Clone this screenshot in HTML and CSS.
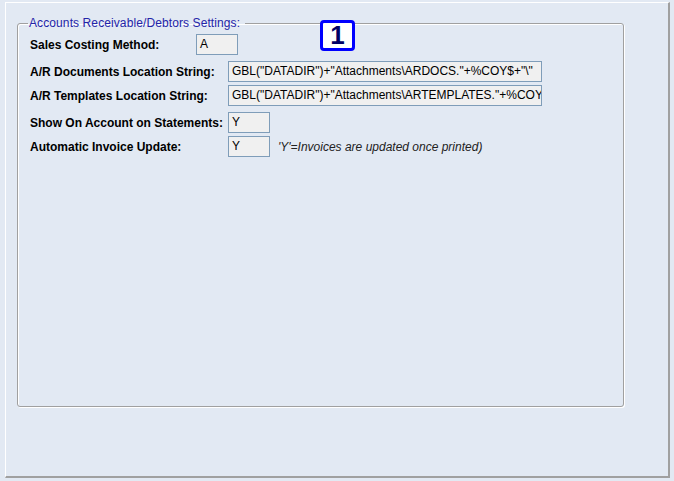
FILE: index.html
```html
<!DOCTYPE html>
<html>
<head>
<meta charset="utf-8">
<link rel="stylesheet" href="styles.css">
</head>
<body>
<div class="panel">
  <fieldset class="group">
    <legend class="group-title">Accounts Receivable/Debtors Settings:</legend>
    <div class="row row-first">
      <span class="label label-short">Sales Costing Method:</span>
      <span class="field field-small">A</span>
    </div>
    <div class="row row-gap">
      <span class="label">A/R Documents Location String:</span>
      <span class="field field-long">GBL("DATADIR")+"Attachments\ARDOCS."+%COY$+"\"</span>
    </div>
    <div class="row row-tight">
      <span class="label">A/R Templates Location String:</span>
      <span class="field field-long">GBL("DATADIR")+"Attachments\ARTEMPLATES."+%COY$+"\"</span>
    </div>
    <div class="row row-gap">
      <span class="label">Show On Account on Statements:</span>
      <span class="field field-small">Y</span>
    </div>
    <div class="row row-tight">
      <span class="label">Automatic Invoice Update:</span>
      <span class="field field-small">Y</span>
      <span class="note">'Y'=Invoices are updated once printed)</span>
    </div>
  </fieldset>
  <div class="badge">1</div>
</div>
</body>
</html>
```

FILE: styles.css
```css
html, body {
  margin: 0;
  padding: 0;
  background: #e2e9f3;
  font-family: "Liberation Sans", Arial, sans-serif;
  font-size: 12px;
  color: #000;
}

.panel {
  position: relative;
  box-sizing: border-box;
  width: 665px;
  height: 476px;
  margin: 2px 0 0 5px;
  border-left: 1px solid #ffffff;
  border-top: 1px solid #ffffff;
  border-right: 2px solid #a0a0a0;
  border-bottom: 2px solid #a0a0a0;
  padding-top: 13px;
}

.group {
  box-sizing: border-box;
  margin: 0 0 0 11px;
  padding: 0;
  width: 607px;
  height: 391px;
  border: 1px solid #a0a0a0;
  border-radius: 3px;
  box-shadow: inset 1px 1px 0 #ffffff, 1px 1px 0 #ffffff;
  min-width: 0;
}

.group-title {
  margin-left: 10px;
  padding: 0 5px 0 1px;
  font-size: 12px;
  line-height: 15px;
  color: #2424a8;
  letter-spacing: 0.1px;
}

.row {
  display: flex;
  align-items: center;
  height: 21px;
  padding-left: 12px;
}

.row-first { margin-top: 3px; }
.row-gap { margin-top: 6px; }
.row-tight { margin-top: 3px; }

.label {
  width: 198px;
  font-weight: bold;
  white-space: nowrap;
}

.label-short { width: 166px; }

.field {
  box-sizing: border-box;
  height: 21px;
  line-height: 19px;
  padding: 0 3px;
  border: 1px solid #7f9db9;
  background: #f0f0f0;
  white-space: nowrap;
  overflow: hidden;
}

.field-small { width: 42px; }
.field-long { width: 314px; }

.note {
  margin-left: 8px;
  font-style: italic;
  color: #222;
  white-space: nowrap;
}

.badge {
  position: absolute;
  left: 314px;
  top: 17px;
  box-sizing: border-box;
  width: 35px;
  height: 31px;
  border: 3px solid #0000ff;
  border-radius: 4px;
  background: #ffffff;
  color: #000066;
  font-weight: bold;
  font-size: 26px;
  line-height: 25px;
  text-align: center;
}
```
